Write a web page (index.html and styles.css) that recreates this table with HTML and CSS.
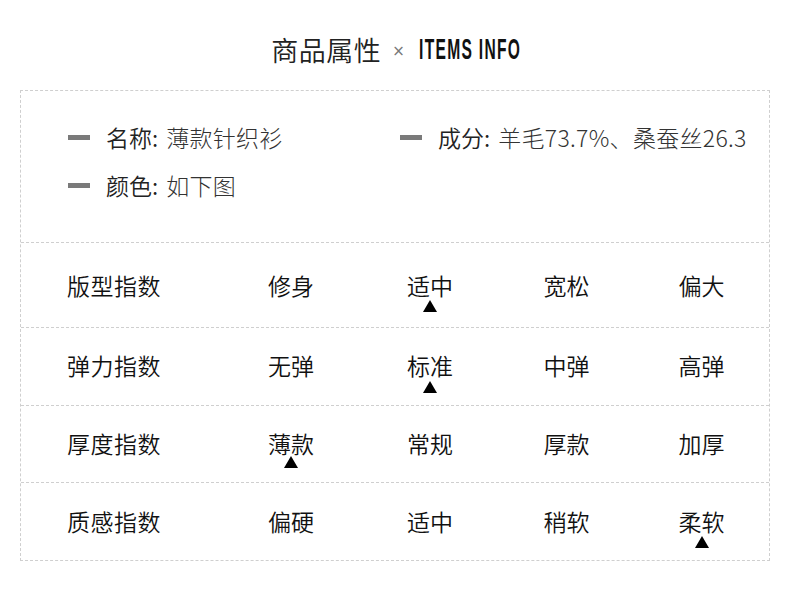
FILE: index.html
```html
<!DOCTYPE html>
<html lang="zh-CN">
<head>
<meta charset="utf-8">
<title>商品属性</title>
<link rel="stylesheet" href="styles.css">
</head>
<body>
<div class="page">
  <header class="title">
    <span class="title-cn">商品属性</span>
    <span class="title-x">×</span>
    <span class="title-en-box"><span class="title-en">ITEMS INFO</span></span>
  </header>
  <section class="card">
    <div class="info">
      <div class="info-item"><span class="bar"></span><span class="label">名称:</span><span class="value">薄款针织衫</span></div>
      <div class="info-item"><span class="bar"></span><span class="label">成分:</span><span class="value">羊毛73.7%、桑蚕丝26.3</span></div>
      <div class="info-item"><span class="bar"></span><span class="label">颜色:</span><span class="value">如下图</span></div>
    </div>
    <div class="row r1">
      <div class="name">版型指数</div>
      <div class="opt">修身</div>
      <div class="opt sel">适中</div>
      <div class="opt">宽松</div>
      <div class="opt">偏大</div>
    </div>
    <div class="row r2">
      <div class="name">弹力指数</div>
      <div class="opt">无弹</div>
      <div class="opt sel">标准</div>
      <div class="opt">中弹</div>
      <div class="opt">高弹</div>
    </div>
    <div class="row r3">
      <div class="name">厚度指数</div>
      <div class="opt sel tight">薄款</div>
      <div class="opt">常规</div>
      <div class="opt">厚款</div>
      <div class="opt">加厚</div>
    </div>
    <div class="row r4">
      <div class="name">质感指数</div>
      <div class="opt">偏硬</div>
      <div class="opt">适中</div>
      <div class="opt">稍软</div>
      <div class="opt sel">柔软</div>
    </div>
  </section>
</div>
</body>
</html>
```

FILE: styles.css
```css
* { box-sizing: border-box; }
html, body { margin: 0; padding: 0; background: #fff; }
body {
  width: 790px;
  height: 591px;
  overflow: hidden;
  font-family: "Noto Sans CJK SC", "Noto Sans", sans-serif;
  color: #111;
}
.page { padding: 0 20px; }
.title {
  height: 90px;
  display: flex;
  align-items: center;
  justify-content: center;
  padding-top: 9px;
  padding-left: 2px;
}
.title-cn {
  font-size: 27px;
  font-weight: 350;
  color: #222;
  line-height: 1;
  letter-spacing: 0.5px;
}
.title-x {
  font-family: "DejaVu Sans", sans-serif;
  font-size: 15px;
  color: #777;
  margin: 2px 14px 0 11px;
}
.title-en-box {
  display: inline-block;
  width: 102px;
  height: 24px;
  position: relative;
}
.title-en {
  position: absolute;
  left: 0;
  top: -6px;
  font-family: "Liberation Sans", sans-serif;
  font-weight: 700;
  font-size: 30px;
  letter-spacing: 2.5px;
  white-space: nowrap;
  color: #111;
  transform: scaleX(0.52);
  transform-origin: left center;
}
.card {
  width: 750px;
  border: 1px dashed #cfcfcf;
}
.info {
  height: 151px;
  display: grid;
  grid-template-columns: 332px 1fr;
  grid-auto-rows: 28px;
  row-gap: 20px;
  padding: 32px 0 0 47px;
}
.info-item {
  display: flex;
  align-items: center;
  white-space: nowrap;
  font-size: 23px;
  line-height: 28px;
}
.bar {
  display: inline-block;
  width: 22px;
  height: 5px;
  background: #7a7a7a;
  margin-right: 16px;
}
.label { color: #222; font-weight: 350; margin-right: 8px; }
.value { color: #333; font-weight: 300; letter-spacing: 0.3px; }
.row {
  border-top: 1px dashed #cfcfcf;
  display: grid;
  grid-template-columns: 200px 140px 138px 135px 135px;
  align-items: center;
  font-size: 23px;
  font-weight: 350;
  color: #111;
}
.r1 { height: 85px; }
.r2 { height: 78px; padding-bottom: 3px; }
.r3 { height: 77px; padding-bottom: 3px; }
.r4 { height: 78px; padding-bottom: 2px; }
.name { padding-left: 46px; letter-spacing: 0.5px; }
.opt {
  text-align: center;
  position: relative;
  line-height: 30px;
}
.sel::after {
  content: "";
  position: absolute;
  left: 50%;
  top: 30px;
  margin-left: -7px;
  border-left: 7px solid transparent;
  border-right: 7px solid transparent;
  border-bottom: 12px solid #000;
}
.r2 .sel::after { top: 31px; }
.tight::after { top: 28px; }
```
